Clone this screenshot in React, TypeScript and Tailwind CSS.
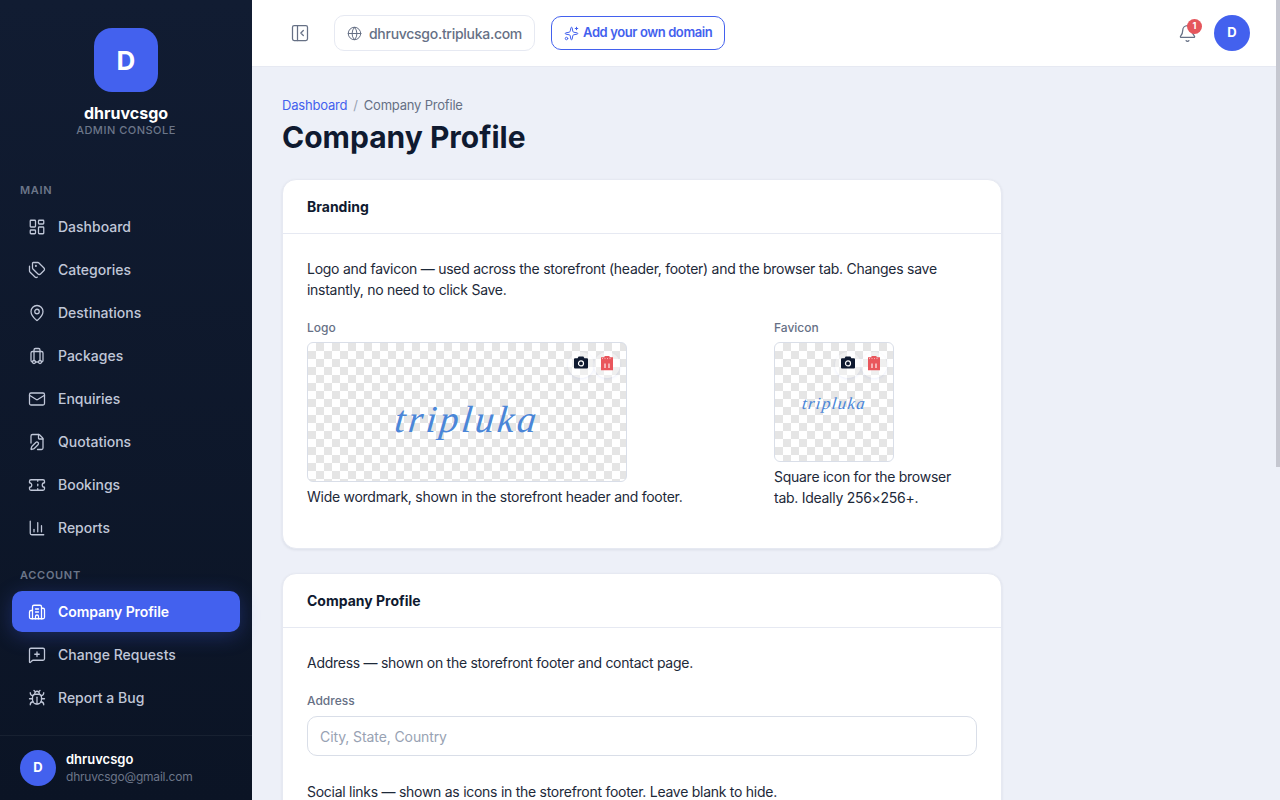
import {
  Bell,
  Bug,
  Building2,
  ChartColumn,
  FilePen,
  Globe,
  LayoutDashboard,
  Luggage,
  Mail,
  MapPin,
  MessageSquarePlus,
  PanelLeftClose,
  Sparkles,
  Tags,
  Ticket,
} from 'lucide-react';
import type { LucideIcon } from 'lucide-react';

type NavItem = { label: string; icon: LucideIcon; active?: boolean };

const mainNav: NavItem[] = [
  { label: 'Dashboard', icon: LayoutDashboard },
  { label: 'Categories', icon: Tags },
  { label: 'Destinations', icon: MapPin },
  { label: 'Packages', icon: Luggage },
  { label: 'Enquiries', icon: Mail },
  { label: 'Quotations', icon: FilePen },
  { label: 'Bookings', icon: Ticket },
  { label: 'Reports', icon: ChartColumn },
];

const accountNav: NavItem[] = [
  { label: 'Company Profile', icon: Building2, active: true },
  { label: 'Change Requests', icon: MessageSquarePlus },
  { label: 'Report a Bug', icon: Bug },
];

const checker =
  'bg-[repeating-conic-gradient(#e5e5e5_0%_25%,#ffffff_0%_50%)] bg-[length:16px_16px]';

function NavLink({ item }: { item: NavItem }) {
  const Icon = item.icon;
  return (
    <div
      className={
        item.active
          ? 'flex h-[41px] items-center gap-[12px] rounded-[10px] bg-[#4361ee] px-4 text-[14px] font-semibold tracking-[-0.1px] text-white shadow-[0_4px_20px_rgba(67,97,238,0.3)]'
          : 'flex h-[41px] items-center gap-[12px] rounded-[10px] px-4 text-[14px] font-medium text-[#c0c7d8]'
      }
    >
      <Icon size={18} strokeWidth={1.7} />
      <span>{item.label}</span>
    </div>
  );
}

function CameraIcon() {
  return (
    <svg width="16" height="16" viewBox="0 0 16 16" fill="#0f1a30">
      <path d="M5.600 1.500h4.800l1 1.800H14a1 1 0 0 1 1 1v8.200a1 1 0 0 1-1 1H2a1 1 0 0 1-1-1V4.300a1 1 0 0 1 1-1h2.600z" />
      <circle cx="8" cy="8.400" r="2.500" fill="none" stroke="#ffffff" strokeWidth="1.200" />
    </svg>
  );
}

function TrashIcon() {
  return (
    <svg width="16" height="16" viewBox="0 0 16 16" fill="#e9565c">
      <path d="M5.500 1h5v1.200h3.500v13H2V2.200h3.500z" />
      <path d="M6 8.500v4.500M10 8.500v4.500" stroke="#ffffff" strokeWidth="1.100" />
      <path d="M3 3.600h10" stroke="#ffffff" strokeWidth="0.600" strokeDasharray="1 1.500" />
    </svg>
  );
}

function ImageTools() {
  return (
    <div className="absolute top-[9px] right-[6px] flex">
      <span className="flex h-[26px] w-[26px] justify-center rounded-full bg-white/40 pt-[3px] shadow-[0_1px_3px_rgba(67,97,238,0.1)]">
        <CameraIcon />
      </span>
      <span className="flex h-[26px] w-[26px] justify-center rounded-full bg-white/40 pt-[3px] shadow-[0_1px_3px_rgba(67,97,238,0.1)]">
        <TrashIcon />
      </span>
    </div>
  );
}

function Field({ label, placeholder }: { label: string; placeholder: string }) {
  return (
    <div>
      <div className="mb-[6px] text-[12px] leading-[18px] font-medium text-[#667085]">{label}</div>
      <div className="flex h-10 items-center rounded-[10px] border border-[#d9dee8] bg-white px-3 text-[14px] tracking-[-0.1px] text-[#98a2b3]">
        {placeholder}
      </div>
    </div>
  );
}

export default function App() {
  return (
    <div className="relative flex h-screen overflow-hidden bg-[#edf0f8] font-['Inter',sans-serif] text-[#0f1a30]">
      <aside className="flex h-screen w-[252px] shrink-0 flex-col bg-gradient-to-b from-[#111c32] to-[#0b1425]">
        <div className="flex flex-col items-center pt-7">
          <div className="flex h-16 w-16 items-center justify-center rounded-[18px] bg-[#4361ee] text-[26px] font-bold text-white">
            D
          </div>
          <div className="mt-[10px] text-[16px] leading-[22px] font-bold text-white">dhruvcsgo</div>
          <div className="text-[11px] leading-[13px] font-medium tracking-[0.5px] text-[#6c7689]">
            ADMIN CONSOLE
          </div>
        </div>
        <nav className="flex flex-1 flex-col px-3 pt-[45px]">
          <div className="mb-2 px-2 text-[11px] leading-4 font-semibold tracking-[0.7px] text-[#6c7689]">
            MAIN
          </div>
          <div className="flex flex-col gap-[2px]">
            {mainNav.map((item) => (
              <NavLink key={item.label} item={item} />
            ))}
          </div>
          <div className="mt-[19px] mb-[8px] px-2 text-[11px] leading-4 font-semibold tracking-[0.7px] text-[#6c7689]">
            ACCOUNT
          </div>
          <div className="flex flex-col gap-[2px]">
            {accountNav.map((item) => (
              <NavLink key={item.label} item={item} />
            ))}
          </div>
        </nav>
        <div className="flex h-[65px] items-center gap-[10px] border-t border-white/5 px-5">
          <div className="flex h-9 w-9 items-center justify-center rounded-full bg-[#4361ee] text-[13px] font-bold text-white">
            D
          </div>
          <div>
            <div className="text-[13px] leading-[17px] font-semibold text-white">dhruvcsgo</div>
            <div className="text-[12px] leading-[17px] tracking-[-0.2px] text-[#6c7689]">dhruvcsgo@gmail.com</div>
          </div>
        </div>
      </aside>

      <div className="h-screen flex-1 overflow-y-auto">
        <header className="flex h-[67px] items-center border-b border-[#e6e9f2] bg-white pr-[30px] pl-[38px]">
          <PanelLeftClose size={20} strokeWidth={1.5} className="text-[#667085]" />
          <div className="ml-[24px] flex h-9 items-center gap-[7px] rounded-[10px] border border-[#e6e9f2] px-3 text-[14px] font-medium tracking-[-0.28px] text-[#667085]">
            <Globe size={15} strokeWidth={1.6} />
            dhruvcsgo.tripluka.com
          </div>
          <div className="ml-4 flex h-[34px] items-center gap-1 rounded-[10px] border border-[#4361ee] px-3 text-[13px] font-semibold tracking-[-0.4px] text-[#4361ee]">
            <Sparkles size={15} strokeWidth={1.6} />
            Add your own domain
          </div>
          <div className="relative ml-auto">
            <Bell size={19} strokeWidth={1.6} className="text-[#667085]" />
            <span className="absolute -top-[5px] -right-[5px] flex h-[15px] w-[15px] items-center justify-center rounded-full bg-[#e5565c] text-[9px] font-bold text-white">
              1
            </span>
          </div>
          <div className="ml-[17px] flex h-9 w-9 items-center justify-center rounded-full bg-[#4361ee] text-[13px] font-bold text-white">
            D
          </div>
        </header>

        <main className="px-[30px] pt-[29px] pb-10">
          <div className="flex items-center gap-[6px] text-[13px] leading-[18px] tracking-[-0.2px]">
            <span className="text-[#4361ee]">Dashboard</span>
            <span className="text-[#98a2b3]">/</span>
            <span className="text-[#667085]">Company Profile</span>
          </div>
          <h1 className="mt-[3px] text-[30px] leading-[40px] font-bold">Company Profile</h1>

          <section className="mt-[22px] w-[720px] rounded-[14px] border border-[#e6e9f2] bg-white shadow-[0_1px_3px_rgba(15,26,48,0.08)]">
            <div className="flex h-[54px] items-center border-b border-[#e6e9f2] px-6 text-[14px] font-bold">
              Branding
            </div>
            <div className="px-6 pt-6 pb-10 text-[14px] leading-[21px] tracking-[-0.27px] text-[#1d2939]">
              <p>
                Logo and favicon — used across the storefront (header, footer) and the browser tab. Changes save instantly, no need to click Save.
              </p>
              <div className="mt-[19px] flex">
                <div className="w-[467px] shrink-0">
                  <div className="mb-[5px] text-[12px] leading-[18px] font-medium tracking-normal text-[#667085]">Logo</div>
                  <div className={`relative flex h-[140px] w-[320px] items-center justify-center overflow-hidden rounded-md border border-[#d9dee8] ${checker}`}>
                    <ImageTools />
                    <span className="mt-[14px] -skew-x-6 font-['Liberation_Serif',serif] text-[38px] tracking-[3px] text-[#4a86d8] italic">tripluka</span>
                  </div>
                  <p className="mt-1">Wide wordmark, shown in the storefront header and footer.</p>
                </div>
                <div className="flex-1">
                  <div className="mb-[5px] text-[12px] leading-[18px] font-medium tracking-normal text-[#667085]">Favicon</div>
                  <div className={`relative flex h-[120px] w-[120px] items-center justify-center overflow-hidden rounded-md border border-[#d9dee8] ${checker}`}>
                    <ImageTools />
                    <span className="mt-[2px] -skew-x-6 font-['Liberation_Serif',serif] text-[17px] tracking-[1.300px] text-[#4a86d8] italic">tripluka</span>
                  </div>
                  <p className="mt-1">Square icon for the browser tab. Ideally 256×256+.</p>
                </div>
              </div>
            </div>
          </section>

          <section className="mt-6 w-[720px] rounded-[14px] border border-[#e6e9f2] bg-white shadow-[0_1px_3px_rgba(15,26,48,0.08)]">
            <div className="flex h-[54px] items-center border-b border-[#e6e9f2] px-6 text-[14px] font-bold">
              Company Profile
            </div>
            <div className="flex h-[540px] flex-col px-6 pt-6 text-[14px] leading-[21px] tracking-[-0.27px] text-[#1d2939]">
              <p>Address — shown on the storefront footer and contact page.</p>
              <div className="mt-[19px] tracking-normal">
                <Field label="Address" placeholder="City, State, Country" />
              </div>
              <p className="mt-[25px]">Social links — shown as icons in the storefront footer. Leave blank to hide.</p>
            </div>
          </section>
        </main>
      </div>

      {/* page scrollbar thumb, the headless browser hides the real one */}
      <div className="absolute top-0 right-0 h-[467px] w-1 bg-[#c5c7d0]" />
    </div>
  );
}
